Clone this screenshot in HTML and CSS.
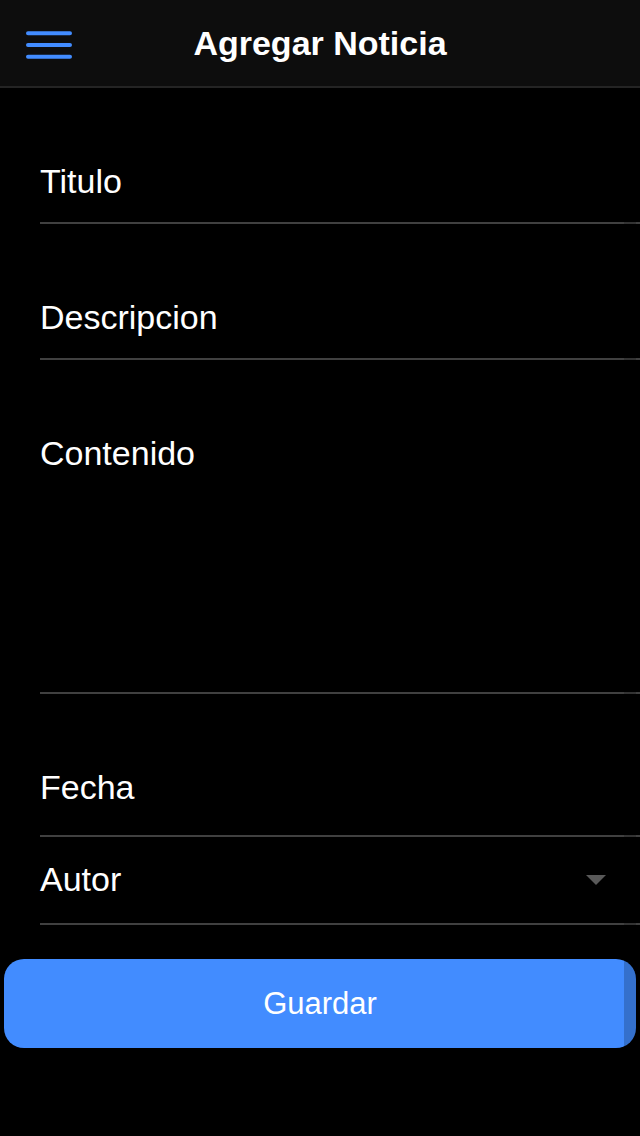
FILE: index.html
```html
<!DOCTYPE html>
<html lang="es">
<head>
<meta charset="utf-8">
<meta name="viewport" content="width=device-width, initial-scale=1">
<title>Agregar Noticia</title>
<link rel="stylesheet" href="styles.css">
</head>
<body>
<header class="toolbar">
  <button class="menu-button" type="button" aria-label="Menu">
    <svg class="menu-icon" viewBox="0 0 48 30" aria-hidden="true">
      <path d="M3 3.3H45M3 15H45M3 26.7H45" fill="none" stroke="currentColor" stroke-width="4" stroke-linecap="round"/>
    </svg>
  </button>
  <h1 class="title">Agregar Noticia</h1>
</header>
<main class="content">
  <form class="form">
    <div class="field">
      <label class="label" for="titulo">Titulo</label>
      <input class="control" id="titulo" type="text">
    </div>
    <div class="field">
      <label class="label" for="descripcion">Descripcion</label>
      <input class="control" id="descripcion" type="text">
    </div>
    <div class="field field-area">
      <label class="label" for="contenido">Contenido</label>
      <textarea class="control" id="contenido"></textarea>
    </div>
    <div class="field field-date">
      <label class="label" for="fecha">Fecha</label>
      <input class="control" id="fecha" type="text">
    </div>
    <div class="field field-select">
      <label class="label" for="autor">Autor</label>
      <select class="control" id="autor"><option value=""></option></select>
      <svg class="arrow" viewBox="0 0 20 10" aria-hidden="true"><path d="M0 0H20L10 10Z" fill="currentColor"/></svg>
    </div>
    <button class="save" type="submit">Guardar</button>
  </form>
  <div class="scroll-thumb"></div>
</main>
</body>
</html>
```
FILE: styles.css
```css
* {
  box-sizing: border-box;
}

body {
  margin: 0;
  min-height: 100vh;
  display: flex;
  flex-direction: column;
  background: #000;
  color: #fff;
  font-family: "Liberation Sans", Arial, sans-serif;
  font-size: 34px;
  line-height: 40px;
}

.toolbar {
  display: grid;
  grid-template-columns: 72px 1fr 72px;
  align-items: center;
  height: 88px;
  padding: 0 24px;
  background: #0d0d0d;
  border-bottom: 2px solid #242424;
}

.menu-button {
  display: flex;
  padding: 4px 0 0;
  border: 0;
  background: none;
  color: #428cff;
}

.menu-icon {
  width: 50px;
  height: 30px;
}

.title {
  margin: 0;
  font-size: 34px;
  font-weight: 700;
  text-align: center;
}

.content {
  position: relative;
  flex: 1;
}

.form {
  display: flex;
  flex-direction: column;
}

.field {
  display: grid;
  margin-left: 40px;
  min-height: 136px;
  border-bottom: 2px solid #404040;
}

.field-area {
  min-height: 334px;
}

.field-date {
  min-height: 143px;
}

.field-select {
  min-height: 88px;
}

.label,
.control,
.arrow {
  grid-area: 1 / 1;
}

.label {
  align-self: start;
  justify-self: start;
  padding-top: 73px;
}

.field-select .label {
  padding-top: 22px;
}

.control {
  width: 100%;
  height: 100%;
  padding: 72px 16px 20px 0;
  border: 0;
  outline: 0;
  border-radius: 0;
  background: transparent;
  color: inherit;
  font: inherit;
  resize: none;
  appearance: none;
}

.field-select .control {
  padding: 20px 56px 20px 0;
}

.arrow {
  align-self: center;
  justify-self: end;
  width: 20px;
  height: 10px;
  margin-right: 34px;
  color: #595959;
  pointer-events: none;
}

.save {
  height: 89px;
  margin: 34px 4px 0;
  border: 0;
  border-radius: 20px;
  background: #428cff;
  color: #fff;
  font-family: inherit;
  font-size: 31px;
}

.scroll-thumb {
  position: absolute;
  top: 4px;
  right: 4px;
  bottom: 4px;
  width: 12px;
  background: rgba(0, 0, 0, 0.2);
  pointer-events: none;
}
```
